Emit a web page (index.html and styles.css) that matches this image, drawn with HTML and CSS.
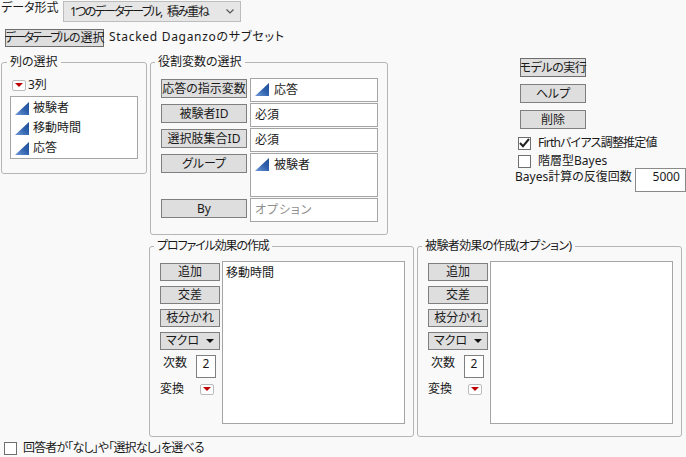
FILE: index.html
```html
<!DOCTYPE html>
<html lang="ja">
<head>
<meta charset="utf-8">
<title>データ形式</title>
<link rel="stylesheet" href="styles.css">
</head>
<body>
<svg class="defs" width="0" height="0" aria-hidden="true">
  <defs>
    <linearGradient id="blue" x1="0" y1="1" x2="1" y2="0">
      <stop offset="0" stop-color="#6f9ad8"/>
      <stop offset="0.55" stop-color="#2f62ad"/>
      <stop offset="1" stop-color="#1d4c94"/>
    </linearGradient>
    <symbol id="tri" viewBox="0 0 14 13"><path d="M0 13 14 0V13Z" fill="url(#blue)"/></symbol>
  </defs>
</svg>
<div class="page">
  <div class="format-row">
    <span class="format-label">データ形式</span>
    <div class="select"><span class="select-text">1つのデータテーブル, <span class="select-tail">積み重ね</span></span><svg class="chev" width="8" height="5" viewBox="0 0 8 5"><path d="M0.5 0.5 4 4 7.5 0.5" fill="none" stroke="#555" stroke-width="1.2"/></svg></div>
  </div>
  <div class="table-row">
    <button class="btn table-btn"><span class="kana-tight">データテーブル</span>の選択</button>
    <span class="table-name"><span class="latin-wide">Stacked Daganzo</span><span class="kana-wide">のサブセット</span></span>
  </div>

  <div class="upper">
    <fieldset class="group cols">
      <legend>列の選択</legend>
      <div class="count"><span class="red-btn"><i></i></span><span>3列</span></div>
      <ul class="list col-list">
        <li><svg class="tri"><use href="#tri"/></svg>被験者</li>
        <li><svg class="tri"><use href="#tri"/></svg>移動時間</li>
        <li><svg class="tri"><use href="#tri"/></svg>応答</li>
      </ul>
    </fieldset>

    <fieldset class="group roles">
      <legend>役割変数の選択</legend>
      <div class="role-grid">
        <button class="btn role-btn">応答の指示変数</button>
        <div class="slot"><svg class="tri"><use href="#tri"/></svg>応答</div>
        <button class="btn role-btn">被験者ID</button>
        <div class="slot">必須</div>
        <button class="btn role-btn">選択肢集合ID</button>
        <div class="slot">必須</div>
        <button class="btn role-btn">グループ</button>
        <div class="slot tall"><svg class="tri"><use href="#tri"/></svg>被験者</div>
        <button class="btn role-btn">By</button>
        <div class="slot hint">オプション</div>
      </div>
    </fieldset>

    <div class="actions">
      <button class="btn act-btn run">モデルの実行</button>
      <button class="btn act-btn">ヘルプ</button>
      <button class="btn act-btn">削除</button>
      <label class="check first"><span class="box"><svg width="11" height="10" viewBox="0 0 11 10"><path d="M1 5 4 8.2 10 1" fill="none" stroke="#222" stroke-width="2"/></svg></span><span class="firth">Firthバイアス調整推定値</span></label>
      <label class="check second"><span class="box"></span>階層型Bayes</label>
      <div class="iter"><span>Bayes計算の反復回数</span><div class="num-box">5000</div></div>
    </div>
  </div>

  <div class="lower">
    <fieldset class="group effects">
      <legend class="legend-tight">プロファイル効果の作成</legend>
      <div class="effect-body">
        <div class="effect-side">
          <button class="btn eff-btn">追加</button>
          <button class="btn eff-btn">交差</button>
          <button class="btn eff-btn">枝分かれ</button>
          <button class="btn eff-btn">マクロ<b class="caret"></b></button>
          <div class="degree"><span>次数</span><div class="deg-box">2</div></div>
          <div class="trans"><span>変換</span><span class="red-btn"><i></i></span></div>
        </div>
        <div class="effect-list">移動時間</div>
      </div>
    </fieldset>
    <fieldset class="group effects">
      <legend class="legend-tight2">被験者効果の作成(オプション)</legend>
      <div class="effect-body">
        <div class="effect-side">
          <button class="btn eff-btn">追加</button>
          <button class="btn eff-btn">交差</button>
          <button class="btn eff-btn">枝分かれ</button>
          <button class="btn eff-btn">マクロ<b class="caret"></b></button>
          <div class="degree"><span>次数</span><div class="deg-box">2</div></div>
          <div class="trans"><span>変換</span><span class="red-btn"><i></i></span></div>
        </div>
        <div class="effect-list"></div>
      </div>
    </fieldset>
  </div>

  <label class="check bottom"><span class="box"></span><span class="bottom-text">回答者が「なし」や「選択なし」を選べる</span></label>
</div>
</body>
</html>
```

FILE: styles.css
```css
* { box-sizing: border-box; }
html, body { margin: 0; padding: 0; }
body {
  width: 686px;
  height: 457px;
  overflow: hidden;
  background: #f9f9f9;
  color: #1a1a1a;
  font: 12px/16px "Noto Sans", "Noto Sans CJK JP", sans-serif;
  font-feature-settings: "palt";
}
.defs { position: absolute; }
.page { display: flex; flex-direction: column; height: 457px; }

.format-row { display: flex; height: 23px; }
.format-label { width: 63px; padding-left: 1px; }
.select {
  width: 178px; height: 21px; margin-top: 1px;
  display: flex; align-items: center; justify-content: space-between;
  padding: 0 6px;
  background: #e6e6e6; border: 1px solid #bdbdbd;
  white-space: pre;
}
.select-text { letter-spacing: -1.7px; }
.select-tail { margin-left: 4px; }
.table-row { display: flex; align-items: center; margin: 6px 0 0 5px; height: 18px; }
.table-name { margin-left: 5px; position: relative; top: -1px; white-space: nowrap; }
.latin-wide { letter-spacing: 0.7px; }
.kana-wide { letter-spacing: 0.8px; }
.kana-tight { letter-spacing: -2px; margin-right: 1px; }

.btn {
  display: flex; align-items: center; justify-content: center;
  padding: 0; margin: 0;
  background: #dedede; border: 1px solid #7f7f7f;
  font: inherit; color: inherit; font-feature-settings: inherit;
  white-space: nowrap;
}
.table-btn { width: 99px; height: 18px; border-color: #6e6e6e; }

.group {
  margin: 0; padding: 0; min-width: 0;
  border: 1px solid #b5b5b5; border-radius: 3px;
  background: #f9f9f9;
}
.group legend { padding: 0 3px; margin-left: -6px; line-height: 14px; }
.cols legend { margin-left: -3px; }
.legend-tight { letter-spacing: -1.1px; }
.legend-tight2 { letter-spacing: -0.6px; }

.upper { display: flex; margin-top: 8px; height: 182px; align-items: flex-start; }
.cols { width: 146px; height: 119px; margin: 0 0 0 1px; padding: 9px 0 0 8px; }
.count { display: flex; align-items: center; gap: 2px; height: 14px; margin-left: 2px; }
.red-btn {
  display: inline-flex; align-items: center; justify-content: center;
  width: 14px; height: 11px;
  background: #fff; border: 1px solid #bbb; border-radius: 2px;
}
.red-btn i {
  width: 0; height: 0;
  border-left: 4px solid transparent; border-right: 4px solid transparent;
  border-top: 4px solid #c00000;
}
.list { list-style: none; margin: 4px 0 0 0; padding: 1px 0 0 4px; }
.col-list { width: 128px; height: 63px; background: #fff; border: 1px solid #a5a5a5; }
.col-list li { display: flex; align-items: center; height: 20px; gap: 4px; }
.tri { width: 14px; height: 13px; flex: none; }

.roles { width: 238px; height: 180px; margin-left: 3px; padding: 9px 0 0 10px; }
.role-grid {
  display: grid;
  grid-template-columns: 86px 128px;
  grid-template-rows: 24px 24px 24px 44px 24px;
  column-gap: 3px; row-gap: 1px;
}
.role-btn { width: 86px; height: 19px; margin-top: 1px; }
.slot {
  display: flex; align-items: flex-start; gap: 5px;
  padding: 3px 4px 0;
  background: #fff; border: 1px solid #a5a5a5;
}
.slot .tri { margin-top: 1px; }
.hint { color: #8f8f8f; letter-spacing: 0.9px; }

.actions { width: 171px; margin-left: 127px; margin-top: 3px; }
.act-btn { width: 66px; height: 19px; margin: 0 0 7px 5px; }
.run { border-color: #6e6e6e; letter-spacing: -0.5px; }
.check { display: flex; align-items: center; height: 14px; white-space: nowrap; }
.box {
  display: flex; align-items: center; justify-content: center;
  width: 13px; height: 13px; margin-right: 7px;
  background: #fff; border: 1px solid #6f6f6f;
}
.firth { letter-spacing: -0.8px; }
.first { margin: 5px 0 0 3px; }
.second { margin: 4px 0 0 3px; }
.iter { display: flex; width: 171px; }
.iter span { margin-top: 1px; white-space: nowrap; width: 120px; }
.num-box {
  width: 51px; height: 24px; padding: 0 5px 0 0;
  text-align: right;
  background: #fff; border: 1px solid #8a8a8a;
}

.lower { display: flex; margin: 2px 0 0 149px; gap: 3px; }
.effects { width: 265px; height: 198px; padding: 8px 0 0 10px; }
.effect-body { display: flex; }
.effect-side { width: 62px; padding-top: 1px; }
.eff-btn { width: 60px; height: 18px; margin: 1px 0 5px; }
.caret {
  width: 0; height: 0; margin-left: 7px;
  border-left: 4px solid transparent; border-right: 4px solid transparent;
  border-top: 4px solid #111;
}
.degree { display: flex; }
.degree span { margin: 0 0 0 3px; width: 33px; }
.deg-box { width: 20px; height: 23px; text-align: center; background: #fff; border: 1px solid #7f7f7f; }
.trans { display: flex; align-items: center; margin-top: 3px; }
.trans span:first-child { width: 40px; }
.effect-list {
  width: 183px; height: 163px; padding: 3px;
  background: #fff; border: 1px solid #a5a5a5;
}
.bottom { margin: 4px 0 0 4px; height: 14px; }
.bottom .box { margin-right: 6px; }
.bottom-text { letter-spacing: -0.85px; }
```
